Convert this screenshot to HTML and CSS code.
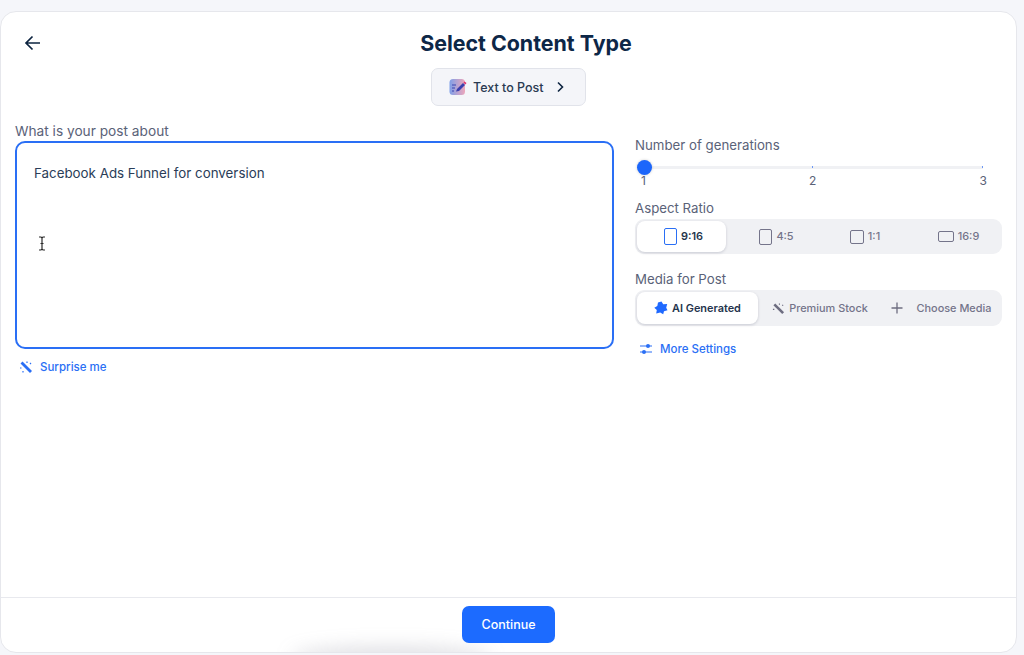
FILE: index.html
```html
<!DOCTYPE html>
<html lang="en">
<head>
<meta charset="utf-8">
<title>Select Content Type</title>
<link rel="stylesheet" href="styles.css">
</head>
<body>
<main class="card">
  <div class="content">
    <header class="header">
      <svg class="back" width="18" height="18" viewBox="0 0 18 18" fill="none" stroke="#0d2440" stroke-width="1.7"><path d="M16 9H2.5M8.5 2.5 2 9l6.5 6.5"/></svg>
      <h1 class="title">Select Content Type</h1>
    </header>
    <div class="type-row">
      <button class="type-btn">
        <svg width="18" height="18" viewBox="0 0 18 18"><defs><linearGradient id="tg" x1="0" x2="1"><stop offset="0" stop-color="#7f9fe8"/><stop offset="1" stop-color="#eda6bb"/></linearGradient></defs><rect x="0.500" y="1" width="15.500" height="16" rx="3.500" fill="url(#tg)"/><path d="M3 7h4M3 10h3M3 13h2" stroke="#3a45b0" stroke-width="1.200"/><path d="M7 13.500 8 11l6-6 2 2-6 6z" fill="#3a3fae"/><path d="m14.500 4.500 1-1 2 1.500-1 1.500z" fill="#e0316e"/></svg>
        <span>Text to Post</span>
        <svg class="chev" width="10" height="12" viewBox="0 0 10 12" fill="none" stroke="#0d2440" stroke-width="1.600"><path d="m3 1.500 4.500 4.500L3 10.500"/></svg>
      </button>
    </div>
    <div class="columns">
      <section class="left">
        <label class="label label-prompt">What is your post about</label>
        <div class="prompt">
          <p class="prompt-text">Facebook Ads Funnel for conversion</p>
          <svg class="ibeam" width="8" height="15" viewBox="0 0 8 15" fill="none" stroke="#2b2b2b" stroke-width="1.200"><path d="M1 1h2l1 1 1-1h2M4 2v11M1 14h2l1-1 1 1h2M2.500 7.500h3"/></svg>
        </div>
        <a class="link link-surprise">
          <svg width="14" height="14" viewBox="0 0 14 14"><path d="M3.500 1.500 13 11l-2 2L1.500 3.500z" fill="#2a6ff5"/><path d="M1 8h1.500M4 11v1.500M8 1.500V3M11 4l1-1" stroke="#2a6ff5" stroke-width="1.200"/></svg>
          <span>Surprise me</span>
        </a>
      </section>
      <section class="right">
        <label class="label">Number of generations</label>
        <div class="slider">
          <div class="track"><i class="tick tick-mid"></i><i class="tick tick-end"></i></div>
          <div class="thumb"></div>
          <div class="marks"><span>1</span><span>2</span><span>3</span></div>
        </div>
        <label class="label label-aspect">Aspect Ratio</label>
        <div class="segments">
          <div class="seg seg-active seg-first"><i class="shape s916"></i><span>9:16</span></div>
          <div class="seg"><i class="shape s45"></i><span>4:5</span></div>
          <div class="seg"><i class="shape s11"></i><span>1:1</span></div>
          <div class="seg seg-last"><i class="shape s169"></i><span>16:9</span></div>
        </div>
        <label class="label label-media">Media for Post</label>
        <div class="segments segments-media">
          <div class="seg seg-active seg-ai">
            <svg width="14" height="14" viewBox="0 0 14 14"><path d="M7.500.5 9.200 3.300l4-.3-1 3.700 1.300 2.600-3.500 1 -.8 3-3-1.700-4 1 .6-3.600L.3 6.800l3-1.800L4 1.500z" fill="#1f69ff"/></svg>
            <span>AI Generated</span>
          </div>
          <div class="seg seg-stock">
            <svg width="13" height="13" viewBox="0 0 14 14"><path d="M3.500 1.500 13 11l-2 2L1.500 3.500z" fill="#6d6d80"/><path d="M1 8h1.500M8 1.500V3M11 4l1-1" stroke="#6d6d80" stroke-width="1.200"/></svg>
            <span>Premium Stock</span>
          </div>
          <div class="seg seg-choose">
            <svg width="12" height="12" viewBox="0 0 12 12" stroke="#6d6d80" stroke-width="1.300"><path d="M6 .5v11M.5 6h11"/></svg>
            <span>Choose Media</span>
          </div>
        </div>
        <a class="link link-more">
          <svg width="14" height="12" viewBox="0 0 14 12" fill="#2a6ff5"><path d="M1 2.500h12v1H1zM1 8.500h12v1H1z"/><circle cx="9" cy="3" r="2"/><circle cx="5" cy="9" r="2"/></svg>
          <span>More Settings</span>
        </a>
      </section>
    </div>
  </div>
  <footer class="footer">
    <div class="glow"></div>
    <button class="continue">Continue</button>
  </footer>
</main>
</body>
</html>
```
FILE: styles.css
```css
* { box-sizing: border-box; }
html, body { height: 100%; }
body {
  margin: 0;
  background: #f5f6fa;
  font-family: "Inter", "Liberation Sans", sans-serif;
  overflow: hidden;
  padding: 11px 7px 2px 0;
}
.card {
  height: 642px;
  background: #fff;
  border: 1.500px solid #e6e7ec;
  border-left-width: 1px;
  border-radius: 16px;
  display: flex;
  flex-direction: column;
  overflow: hidden;
}
.content { flex: 1; display: flex; flex-direction: column; }
.header {
  display: flex;
  align-items: center;
  padding: 17px 6px 0 23px;
  height: 44px;
}
.back { flex: none; }
.title {
  flex: 1;
  margin: 0;
  text-align: center;
  font-size: 21.400px;
  line-height: 28px;
  font-weight: 700;
  color: #0d2747;
}
.type-row { display: flex; justify-content: center; padding-top: 12px; }
.type-btn {
  width: 155px;
  height: 38px;
  display: flex;
  align-items: center;
  padding: 0 0 0 17px;
  background: #f4f5f9;
  border: 1px solid #e1e3ea;
  border-radius: 7px;
  font: 500 12.500px "Inter", sans-serif;
  color: #2a3a52;
}
.type-btn span { margin-left: 6px; }
.chev { margin-left: 11px; }
.columns { display: flex; padding: 0 14px 0 14px; }
.left { width: 599px; flex: none; }
.right { margin-left: 21px; width: 367px; padding-top: 30px; }
.label {
  display: block;
  font-size: 13.250px;
  line-height: 18px;
  color: #5a6278;
}
.label-prompt { margin-top: 16px; font-size: 13.700px; }
.prompt {
  position: relative;
  height: 208px;
  margin-top: 1px;
  border: 2px solid #2a6ff5;
  border-radius: 10px;
  padding: 21px 17px;
}
.prompt-text {
  margin: 0;
  font-size: 13.350px;
  line-height: 18px;
  color: #2a3d58;
}
.ibeam { position: absolute; left: 21px; top: 93px; }
.link {
  display: flex;
  align-items: center;
  color: #2a6ff5;
  font-size: 11.500px;
  font-weight: 500;
  line-height: 16px;
}
.link-surprise { margin: 10px 0 0 4px; gap: 7px; }
.link-more { margin: 15px 0 0 4px; gap: 7px; }
.slider { position: relative; height: 44px; }
.track {
  position: absolute;
  left: 9px;
  right: 19px;
  top: 12px;
  height: 3px;
  background: #f0f1f4;
}
.tick { position: absolute; top: 0; width: 1px; height: 2px; background: #6b97f5; }
.tick-mid { left: 168px; }
.tick-end { right: 0; }
.thumb {
  position: absolute;
  left: 2px;
  top: 6px;
  width: 15px;
  height: 15px;
  border-radius: 50%;
  background: #1c66fb;
  box-shadow: 0 0 3px rgba(0,0,0,.2);
}
.marks {
  position: absolute;
  left: 6px;
  right: 15px;
  top: 19px;
  display: flex;
  justify-content: space-between;
  font-size: 12px;
  line-height: 16px;
  color: #5a6278;
}
.label-aspect { margin-top: 1px; }
.segments {
  height: 35px;
  margin-top: 2px;
  display: grid;
  grid-template-columns: 89px 101px 76px 1fr;
  padding: 2px;
  background: #f0f1f4;
  border-radius: 9px;
}
.seg {
  display: flex;
  align-items: center;
  justify-content: center;
  gap: 4px;
  font-size: 10.900px;
  font-weight: 500;
  color: #74748a;
}
.seg span { margin-top: -1px; }
.seg-first { padding-left: 4px; }
.seg-last { padding-left: 14px; }
.seg-active {
  background: #fff;
  border-radius: 8px;
  color: #24344c;
  font-weight: 600;
  box-shadow: 0 1px 3px rgba(20,30,60,.18);
}
.shape { display: block; border: 1.500px solid #74748a; border-radius: 2px; }
.s916 { width: 13px; height: 17px; border-color: #2a6ff5; }
.s45 { width: 13px; height: 16px; }
.s11 { width: 14px; height: 14px; }
.s169 { width: 16px; height: 11px; }
.label-media { margin-top: 16px; }
.segments-media { grid-template-columns: 121px 122px 1fr; height: 36px; margin-top: 2px; }
.seg-stock { padding-left: 2px; }
.seg-choose { gap: 14px; padding-left: 2px; }
.continue {
  position: relative;
  width: 93px;
  height: 37px;
  border: 0;
  border-radius: 7px;
  background: #1c6bff;
  color: #fff;
  font: 500 12.500px "Inter", sans-serif;
}
.footer {
  position: relative;
  height: 55px;
  border-top: 1.500px solid #e8e9ee;
  display: flex;
  justify-content: center;
  padding-top: 8px;
  overflow: hidden;
}
.glow {
  position: absolute;
  left: 290px;
  bottom: -16px;
  width: 200px;
  height: 22px;
  border-radius: 50%;
  background: rgba(120,120,135,.22);
  filter: blur(9px);
}
```
